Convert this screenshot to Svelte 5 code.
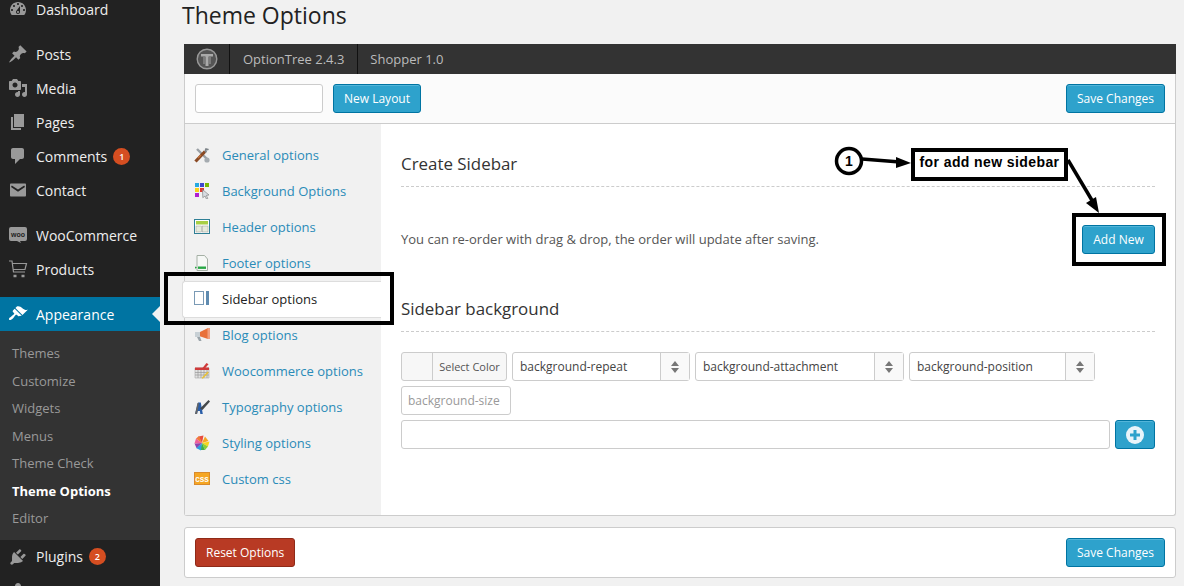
<script>
	const menu = [
		{ label: 'Dashboard', icon: 'M3.76 16h12.48c1.1-1.37 1.76-3.11 1.76-5 0-4.42-3.58-8-8-8s-8 3.58-8 8c0 1.89.66 3.63 1.76 5zM10 4c.55 0 1 .45 1 1s-.45 1-1 1-1-.45-1-1 .45-1 1-1zM6 6c.55 0 1 .45 1 1s-.45 1-1 1-1-.45-1-1 .45-1 1-1zm8 0c.55 0 1 .45 1 1s-.45 1-1 1-1-.45-1-1 .45-1 1-1zm-5.37 5.55L12 7v6c0 1.1-.9 2-2 2s-2-.9-2-2c0-.57.24-1.08.63-1.45zM4 10c.55 0 1 .45 1 1s-.45 1-1 1-1-.45-1-1 .45-1 1-1zm12 0c.55 0 1 .45 1 1s-.45 1-1 1-1-.45-1-1 .45-1 1-1zm-5 3c0-.55-.45-1-1-1s-1 .45-1 1 .45 1 1 1 1-.45 1-1z', gap: true },
		{ label: 'Posts', icon: 'M10.44 3.02l1.82-1.82 6.36 6.35-1.83 1.82c-1.05-.68-2.48-.57-3.41.36l-.75.75c-.92.93-1.04 2.35-.35 3.41l-1.83 1.82-2.41-2.41-2.8 2.79c-.42.42-3.38 2.71-3.8 2.29s1.86-3.39 2.28-3.81l2.79-2.79L4.1 9.36l1.83-1.82c1.05.69 2.48.57 3.41-.36l.75-.75c.93-.92 1.04-2.35.35-3.41z' },
		{ label: 'Media', icon: 'M13 11V4c0-.55-.45-1-1-1h-1.67L9 1H5L3.67 3H2c-.55 0-1 .45-1 1v7c0 .55.45 1 1 1h10c.55 0 1-.45 1-1zM7 4.5c1.38 0 2.5 1.12 2.5 2.5S8.38 9.5 7 9.5 4.5 8.38 4.5 7 5.62 4.5 7 4.5zM14 6h5v10.5c0 1.38-1.12 2.5-2.5 2.5S14 17.88 14 16.5s1.12-2.5 2.5-2.5c.17 0 .34.02.5.05V9h-3V6zm-4 8.05V13h2v3.5c0 1.38-1.12 2.5-2.5 2.5S7 17.88 7 16.5 8.12 14 9.5 14c.17 0 .34.02.5.05z' },
		{ label: 'Pages', icon: 'M6 15V2h10v13H6zm-1 1h8v2H3V5h2v11z' },
		{ label: 'Comments', icon: 'M5 2h9c1.1 0 2 .9 2 2v7c0 1.1-.9 2-2 2h-2l-5 5v-5H5c-1.1 0-2-.9-2-2V4c0-1.1.9-2 2-2z', badge: 1 },
		{ label: 'Contact', icon: 'M2 4.500C2 4 2.400 3.500 3 3.500h14c.6 0 1 .5 1 1v11c0 .5-.4 1-1 1H3c-.6 0-1-.5-1-1zM3.800 5.500L3 7l7 4.800L17 7l-.8-1.500L10 9.600z', gap: true },
		{ label: 'WooCommerce', woo: true },
		{ label: 'Products', cart: true, gap: true },
		{ label: 'Appearance', icon: 'M14.48 11.06L7.41 3.99l1.5-1.5c.5-.56 2.3-.47 3.51.32 1.21.8 1.43 1.28 2.91 2.1 1.18.64 2.45 1.26 4.45.85zm-.71.71L6.7 4.7 4.93 6.47c-.39.39-.39 1.02 0 1.41l1.06 1.06c.39.39.39 1.03 0 1.42-.6.6-1.43 1.11-2.21 1.69-.35.26-.7.53-1.01.84C1.43 13.23.4 14.98 1.2 15.78c.79.79 2.55-.23 3.88-1.57.31-.31.58-.66.84-1.01.58-.78 1.09-1.61 1.69-2.21.39-.39 1.02-.39 1.41 0l1.06 1.06c.39.39 1.02.39 1.41 0z', current: true },
		{ label: 'Plugins', icon: 'M13.11 4.36L9.87 7.6 8 5.73l3.24-3.24c.35-.34 1.05-.2 1.56.32.52.51.66 1.21.31 1.55zm-8 1.77l.91-1.12 9.01 9.01-1.19.84c-.71.71-2.63 1.16-3.82 1.16H6.14L4.9 17.26c-.59.59-1.54.59-2.12 0-.59-.58-.59-1.53 0-2.12l1.24-1.24v-3.88c0-1.13.4-3.19 1.09-3.89zm7.26 3.97l3.24-3.24c.34-.35 1.04-.21 1.55.31.52.51.66 1.21.31 1.55l-3.24 3.25z', badge: 2 },
		{ label: '', icon: 'M10 9.250c-2.270 0-2.900-1.800-3.030-3.200C6.800 4.100 7.700 2 10 2s3.200 2.100 3.030 4.050c-.130 1.400-.760 3.200-3.030 3.200zM10 10.800c1.900 0 7 .7 7 3.700V18H3v-3.500c0-3 5.100-3.700 7-3.700z' }
	];
	const submenu = ['Themes', 'Customize', 'Widgets', 'Menus', 'Theme Check', 'Theme Options', 'Editor'];
	const tabs = [
		['general', 'General options'],
		['background', 'Background Options'],
		['header', 'Header options'],
		['footer', 'Footer options'],
		['sidebar', 'Sidebar options'],
		['blog', 'Blog options'],
		['woo', 'Woocommerce options'],
		['type', 'Typography options'],
		['styling', 'Styling options'],
		['css', 'Custom css']
	];
	const selects = [
		{ label: 'background-repeat', width: 178 },
		{ label: 'background-attachment', width: 209 },
		{ label: 'background-position', width: 186 }
	];
</script>

<div class="page">
	<aside class="adminmenu">
		<ul class="menu">
			{#each menu as item}
				<li class="item" class:current={item.current} class:gap={item.gap}>
					<span class="menu-icon">
						{#if item.woo}
							<svg viewBox="0 0 20 20" width="20" height="20">
								<path d="M3 2h14a2 2 0 0 1 2 2v10a2 2 0 0 1-2 2h-5l1 2-4-2H3a2 2 0 0 1-2-2V4a2 2 0 0 1 2-2z" />
								<text x="10" y="11.500" text-anchor="middle" class="woo-text">woo</text>
							</svg>
						{:else if item.cart}
							<svg class="cart" viewBox="0 0 20 20" width="20" height="20">
								<path d="M1 2h3l1.500 11h11.500M4.500 4.500h14l-1.500 6H5.300" />
								<path class="wheels" d="M5.500 17h3M13.500 17h3" />
							</svg>
						{:else}
							<svg viewBox="0 0 20 20" width="20" height="20"><path d={item.icon} /></svg>
						{/if}
					</span>
					<span>{item.label}</span>
					{#if item.badge}<span class="badge">{item.badge}</span>{/if}
				</li>
				{#if item.current}
					<li>
						<ul class="submenu">
							{#each submenu as sub}
								<li class:on={sub === 'Theme Options'}>{sub}</li>
							{/each}
						</ul>
					</li>
				{/if}
			{/each}
		</ul>
	</aside>

	<main class="wrap">
		<h1>Theme Options</h1>

		<section class="panel">
			<header class="brand">
				<span class="brand-logo">
					<svg viewBox="0 0 22 22" width="22" height="22">
						<circle cx="11" cy="11" r="9.800" fill="#555" stroke="#999" stroke-width="1.400" />
						<path d="M5 6h12v2.500h-4.500V18h-3V8.500H5z" fill="#aaa" />
						<path d="M8 9v7M14 9v7" stroke="#888" stroke-width="1.500" />
					</svg>
				</span>
				<span class="brand-item">OptionTree 2.4.3</span>
				<span class="brand-item plain">Shopper 1.0</span>
			</header>

			<div class="toolbar">
				<input class="field layout-name" type="text" />
				<button class="btn blue">New Layout</button>
				<button class="btn blue push">Save Changes</button>
			</div>

			<div class="body">
				<ul class="tabs">
					{#each tabs as [id, label]}
						<li class="tab" class:active={id === 'sidebar'}>
							<svg class="tab-icon" viewBox="0 0 16 16" width="16" height="16">
								{#if id === 'general'}
									<path d="M3 2l11 11" stroke="#9aa0a5" stroke-width="2.400" />
									<circle cx="13" cy="13" r="2.600" fill="#a5abb0" />
									<path d="M1.500 14.500L11 4.500" stroke="#8a4a24" stroke-width="3.200" />
									<path d="M4 11l3-3" stroke="#c2703a" stroke-width="1.200" />
									<path d="M10.500 3.500l1-2.500 3.500 1-1 1.500-1.500-.5.500 2-1.500 1z" fill="#7d8489" />
								{:else if id === 'background'}
									<rect x="1" y="0" width="4" height="4" fill="#27a9e0" />
									<rect x="6" y="0" width="4" height="4" fill="#3f48cc" />
									<rect x="11" y="0" width="4" height="4" fill="#7ab800" />
									<rect x="1" y="5" width="4" height="4" fill="#f6d21a" />
									<rect x="6" y="5" width="4" height="4" fill="#e03a2f" />
									<rect x="1" y="10" width="4" height="4" fill="#b01fd0" />
									<path d="M8.500 6.500l6.500 5.500-2.700.4 1.500 3-1.400.6-1.400-3-2.200 1.700z" fill="#d8dde2" stroke="#777" stroke-width=".6" />
								{:else if id === 'header'}
									<rect x=".5" y=".5" width="15" height="14" fill="#fff" stroke="#2f7f95" />
									<rect x="2" y="2" width="12" height="3.500" fill="#a8cf45" />
									<rect x="2" y="7" width="5.500" height="6" fill="#e6ebdc" stroke="#999" stroke-width=".5" />
									<rect x="8.500" y="7" width="5.500" height="6" fill="#e6ebdc" stroke="#999" stroke-width=".5" />
								{:else if id === 'footer'}
									<path d="M3 .5h7.500l3 3.500V15.500H3z" fill="#f6f8f6" stroke="#a5b0a5" />
									<rect x="4" y="11.500" width="8" height="2.400" fill="#28a745" />
									<path d="M1 11.500l2 1-2 1.200z" fill="#28a745" />
								{:else if id === 'sidebar'}
									<rect x=".5" y=".5" width="9" height="13" fill="#fff" stroke="#7a9ab5" />
									<rect x="12" y="0" width="3" height="14" fill="#5f8bb0" />
								{:else if id === 'blog'}
									<path d="M5 5.500l9-4.500v11l-9-3z" fill="#e8703a" />
									<rect x="1" y="5" width="5" height="5" fill="#c8d0d5" />
									<path d="M3 10h3l1.500 4H5z" fill="#9aa4aa" />
									<path d="M13.500 1H16v11h-2.500z" fill="#f0a080" />
								{:else if id === 'woo'}
									<path d="M1 5h14v10H1z" fill="#e2e2e2" stroke="#aaa" stroke-width=".6" />
									<path d="M4 7v8M7 7v8M10 7v8M13 7v8M1 9.500h14M1 12h14" stroke="#999" stroke-width=".7" />
									<path d="M1 4.500h14v2.500H1z" fill="#cf3a3a" />
									<path d="M8.500 5l4-5 2 1.200-3.500 4z" fill="#cf3a3a" />
									<path d="M7.500 15l6-6.500 1.300 1.300-6 6z" fill="#e8c23a" />
								{:else if id === 'type'}
									<path d="M1 15L4 3.500h2.800l2 11.500H6.300L5.900 12H3.800L3 15z" fill="#2a5ea8" />
									<path d="M1 15L3.500 4 5 4 3 15z" fill="#666" />
									<path d="M6 9.500L14.500 1l1.500 1.500L8.500 11z" fill="#44484b" />
								{:else if id === 'styling'}
									<path d="M8 8L4.500 1.500 9.500 .5z" fill="#e84c3d" />
									<path d="M8 8l3-6.500 3.500 4.500z" fill="#f5a623" />
									<path d="M8 8l7.500-1.500-1.500 5z" fill="#f7d51d" />
									<path d="M8 8l6 3.500-3 3.500z" fill="#8ccf2e" />
									<path d="M8 8l3 7H6z" fill="#3fae49" />
									<path d="M8 8l-1 7.500L2 13z" fill="#2e9fe0" />
									<path d="M8 8l-5.500 5L.5 8.500z" fill="#8e44ad" />
									<path d="M8 8L.5 8.500 2 3.500z" fill="#f0609a" />
									<path d="M8 8L2 3.500l3-2.500z" fill="#f07a3a" />
								{:else if id === 'css'}
									<rect x=".5" y="1.500" width="15" height="12" fill="#f5a623" stroke="#d98a2b" />
									<text x="8" y="10.500" text-anchor="middle" class="css-text">CSS</text>
								{/if}
							</svg>
							<span>{label}</span>
						</li>
					{/each}
				</ul>

				<div class="content">
					<div class="setting create">
						<h2>Create Sidebar</h2>
						<div class="row-between">
							<p>You can re-order with drag &amp; drop, the order will update after saving.</p>
							<button class="btn blue add-new">Add New</button>
						</div>
					</div>

					<div class="setting">
						<h2>Sidebar background</h2>
						<div class="bg-fields">
							<div class="color-picker">
								<span class="swatch"></span>
								<span class="pick-label">Select Color</span>
							</div>
							{#each selects as s}
								<div class="select" style="width: {s.width}px">
									<span class="select-label">{s.label}</span>
									<span class="select-arrows">
										<svg viewBox="0 0 8 12" width="8" height="12"><path d="M4 0l4 5H0zM4 12L0 7h8z" fill="#777" /></svg>
									</span>
								</div>
							{/each}
							<div class="size-field">background-size</div>
						</div>
						<div class="upload-row">
							<input class="field upload" type="text" />
							<button class="btn blue plus" aria-label="Add">
								<svg viewBox="0 0 18 18" width="18" height="18">
									<circle cx="9" cy="9" r="9" fill="#e8f4fa" />
									<path d="M7.500 4h3v3.500H14v3h-3.500V14h-3v-3.500H4v-3h3.500z" fill="#2ea2cc" />
								</svg>
							</button>
						</div>
					</div>
				</div>
			</div>
		</section>

		<section class="panel footer-bar">
			<button class="btn red">Reset Options</button>
			<button class="btn blue push">Save Changes</button>
		</section>
	</main>

	<!-- hand drawn callouts sitting on top of the screenshot -->
	<svg class="notes" width="1184" height="586" viewBox="0 0 1184 586">
		<rect x="166" y="274" width="226" height="49" fill="none" stroke="#000" stroke-width="4" />
		<rect x="1074" y="215" width="90" height="49" fill="none" stroke="#000" stroke-width="4" />
		<circle cx="849" cy="161" r="12.500" fill="#fff" stroke="#000" stroke-width="3.500" />
		<path d="M862 159l38 3" stroke="#000" stroke-width="3.500" />
		<path d="M911 163l-15-6 0 11z" fill="#000" />
		<path d="M1068 160l25 42" stroke="#000" stroke-width="3.500" />
		<path d="M1099 213l-13-10 10-6z" fill="#000" />
		<text x="849" y="166" text-anchor="middle" class="note-num">1</text>
	</svg>
	<div class="note-label">for add new sidebar</div>
</div>

<style>
	:global(body) {
		margin: 0;
		background: #f1f1f1;
		overflow: hidden;
	}

	ul {
		list-style: none;
		margin: 0;
		padding: 0;
	}

	.page {
		position: relative;
		display: flex;
		width: 1184px;
		height: 586px;
		overflow: hidden;
		font-family: 'Open Sans', sans-serif;
		font-size: 13px;
		color: #444;
		background: #f1f1f1;
	}

	.adminmenu {
		flex: 0 0 160px;
		height: 586px;
		overflow: hidden;
		background: #222;
	}

	.menu {
		margin-top: -8px;
	}

	.item {
		display: flex;
		align-items: center;
		height: 34px;
		padding-left: 8px;
		font-size: 14px;
		color: #eee;
		position: relative;
	}

	.item.gap {
		margin-bottom: 11px;
	}

	.item.current {
		background: #0074a2;
		color: #fff;
	}

	.item.current::after {
		content: '';
		position: absolute;
		right: 0;
		top: 9px;
		border: 8px solid transparent;
		border-right-color: #f1f1f1;
		border-left-width: 0;
	}

	.menu-icon {
		display: flex;
		width: 28px;
		flex: none;
	}

	.menu-icon path {
		fill: #999;
	}

	.item.current .menu-icon path {
		fill: #fff;
	}

	.menu-icon .cart path {
		fill: none;
		stroke: #999;
		stroke-width: 1.200;
	}

	.menu-icon .cart .wheels {
		stroke-width: 2.400;
	}

	.woo-text {
		font-family: 'Liberation Sans', sans-serif;
		font-size: 7px;
		font-weight: 700;
		fill: #222;
	}

	.badge {
		display: inline-flex;
		align-items: center;
		justify-content: center;
		width: 17px;
		height: 17px;
		margin-left: 6px;
		border-radius: 50%;
		background: #d54e21;
		color: #fff;
		font-size: 9px;
		font-weight: 600;
	}

	.submenu {
		background: #333;
		padding: 9px 0 7px;
	}

	.submenu li {
		height: 27.500px;
		line-height: 27.500px;
		padding-left: 12px;
		font-size: 13px;
		color: #999;
	}

	.submenu li.on {
		color: #fff;
		font-weight: 700;
	}

	.wrap {
		flex: 1;
		min-width: 0;
		padding: 0 8px 0 22px;
	}

	h1 {
		margin: 0 0 13px;
		font-size: 23px;
		font-weight: 400;
		line-height: 31px;
		color: #222;
	}

	.panel {
		margin-left: 2px;
		background: #fff;
		border: 1px solid #ccc;
		border-top: 0;
		border-radius: 0 0 3px 3px;
		box-sizing: border-box;
	}

	.brand {
		display: flex;
		height: 30px;
		margin: 0 -1px;
		background: #333;
		color: #bbb;
	}

	.brand-logo {
		display: flex;
		align-items: center;
		justify-content: center;
		width: 45px;
		border-right: 1px solid #111;
	}

	.brand-item {
		display: flex;
		align-items: center;
		padding: 0 13px;
		border-right: 1px solid #111;
	}

	.brand-item.plain {
		border-right: 0;
		margin-left: -1px;
	}

	.toolbar {
		display: flex;
		align-items: center;
		gap: 10px;
		height: 49px;
		padding: 0 10px;
		background: #fbfbfb;
		border-bottom: 1px solid #ccc;
	}

	.field {
		box-sizing: border-box;
		height: 29px;
		padding: 0 6px;
		background: #fff;
		border: 1px solid #ccc;
		border-radius: 3px;
	}

	.layout-name {
		width: 128px;
	}

	.btn {
		box-sizing: border-box;
		height: 29px;
		padding: 0 10px;
		border: 1px solid #0074a2;
		border-radius: 3px;
		font-family: inherit;
		font-size: 12px;
		color: #fff;
	}

	.blue {
		background: #2ea2cc;
		box-shadow: inset 0 1px 0 rgba(120, 200, 230, 0.5);
	}

	.red {
		background: #b83a24;
		border-color: #8f2a18;
	}

	.push {
		margin-left: auto;
	}

	.add-new {
		width: 73px;
		padding: 0;
	}

	.body {
		display: flex;
		height: 391px;
	}

	.tabs {
		flex: 0 0 196px;
		padding-top: 13px;
		background: #f1f1f1;
	}

	.tab {
		display: flex;
		align-items: center;
		gap: 12px;
		height: 36px;
		padding-left: 9px;
		font-size: 13px;
		color: #2a8bb8;
	}

	.tab.active {
		box-sizing: border-box;
		height: 37px;
		margin: 0 0 -1px -3px;
		padding: 0 0 1px 11px;
		background: #fff;
		border: 1px solid #ddd;
		border-right: 0;
		border-radius: 3px 0 0 3px;
		color: #222;
	}

	.tab-icon {
		flex: none;
	}

	.css-text {
		font-family: 'Liberation Mono', monospace;
		font-size: 7.500px;
		font-weight: 700;
		fill: #fff;
	}

	.content {
		flex: 1;
		padding: 0 20px;
		min-width: 0;
	}

	.setting.create {
		padding-top: 27px;
		height: 145px;
		box-sizing: border-box;
		margin-bottom: 27px;
	}

	h2 {
		margin: 0 0 20px;
		padding-bottom: 9px;
		border-bottom: 1px dashed #ccc;
		font-size: 16.900px;
		font-weight: 400;
		line-height: 26px;
		color: #333;
	}

	.create h2 {
		margin-bottom: 38px;
	}

	.row-between {
		display: flex;
		align-items: center;
		justify-content: space-between;
	}

	.row-between p {
		margin: 0 0 2px;
		color: #555;
	}

	.bg-fields {
		display: flex;
		flex-wrap: wrap;
		gap: 5px;
	}

	.color-picker,
	.select,
	.size-field {
		box-sizing: border-box;
		height: 29px;
		border: 1px solid #ccc;
		border-radius: 3px;
	}

	.color-picker {
		display: flex;
		width: 106px;
		background: #f7f7f7;
	}

	.swatch {
		width: 30px;
		border-right: 1px solid #ccc;
	}

	.pick-label {
		flex: 1;
		text-align: center;
		line-height: 28px;
		font-size: 11px;
		color: #555;
	}

	.select {
		display: flex;
		background: #fff;
	}

	.select-label {
		flex: 1;
		padding-left: 7px;
		line-height: 28px;
		font-size: 12px;
		color: #444;
	}

	.select-arrows {
		display: flex;
		align-items: center;
		justify-content: center;
		width: 28px;
		background: #f9f9f9;
		border-left: 1px solid #ccc;
	}

	.size-field {
		width: 110px;
		padding-left: 6px;
		background: #fff;
		line-height: 28px;
		font-size: 12px;
		color: #999;
	}

	.upload-row {
		display: flex;
		gap: 5px;
		margin-top: 5px;
	}

	.upload {
		flex: 1;
	}

	.plus {
		display: flex;
		align-items: center;
		justify-content: center;
		width: 40px;
		padding: 0;
	}

	.footer-bar {
		display: flex;
		align-items: center;
		height: 51px;
		margin-top: 11px;
		padding: 0 10px 1px;
		border-top: 1px solid #ccc;
		border-radius: 3px;
	}

	.notes {
		position: absolute;
		top: 0;
		left: 0;
		pointer-events: none;
	}

	.note-num {
		font-family: 'Liberation Sans', sans-serif;
		font-size: 14px;
		font-weight: 700;
	}

	.note-label {
		position: absolute;
		left: 911px;
		top: 148px;
		box-sizing: border-box;
		width: 157px;
		height: 33px;
		border: 4px solid #000;
		background: #fff;
		font-family: 'Liberation Sans', sans-serif;
		font-size: 14px;
		font-weight: 700;
		letter-spacing: 0.400px;
		line-height: 21px;
		text-align: center;
		color: #000;
	}
</style>
